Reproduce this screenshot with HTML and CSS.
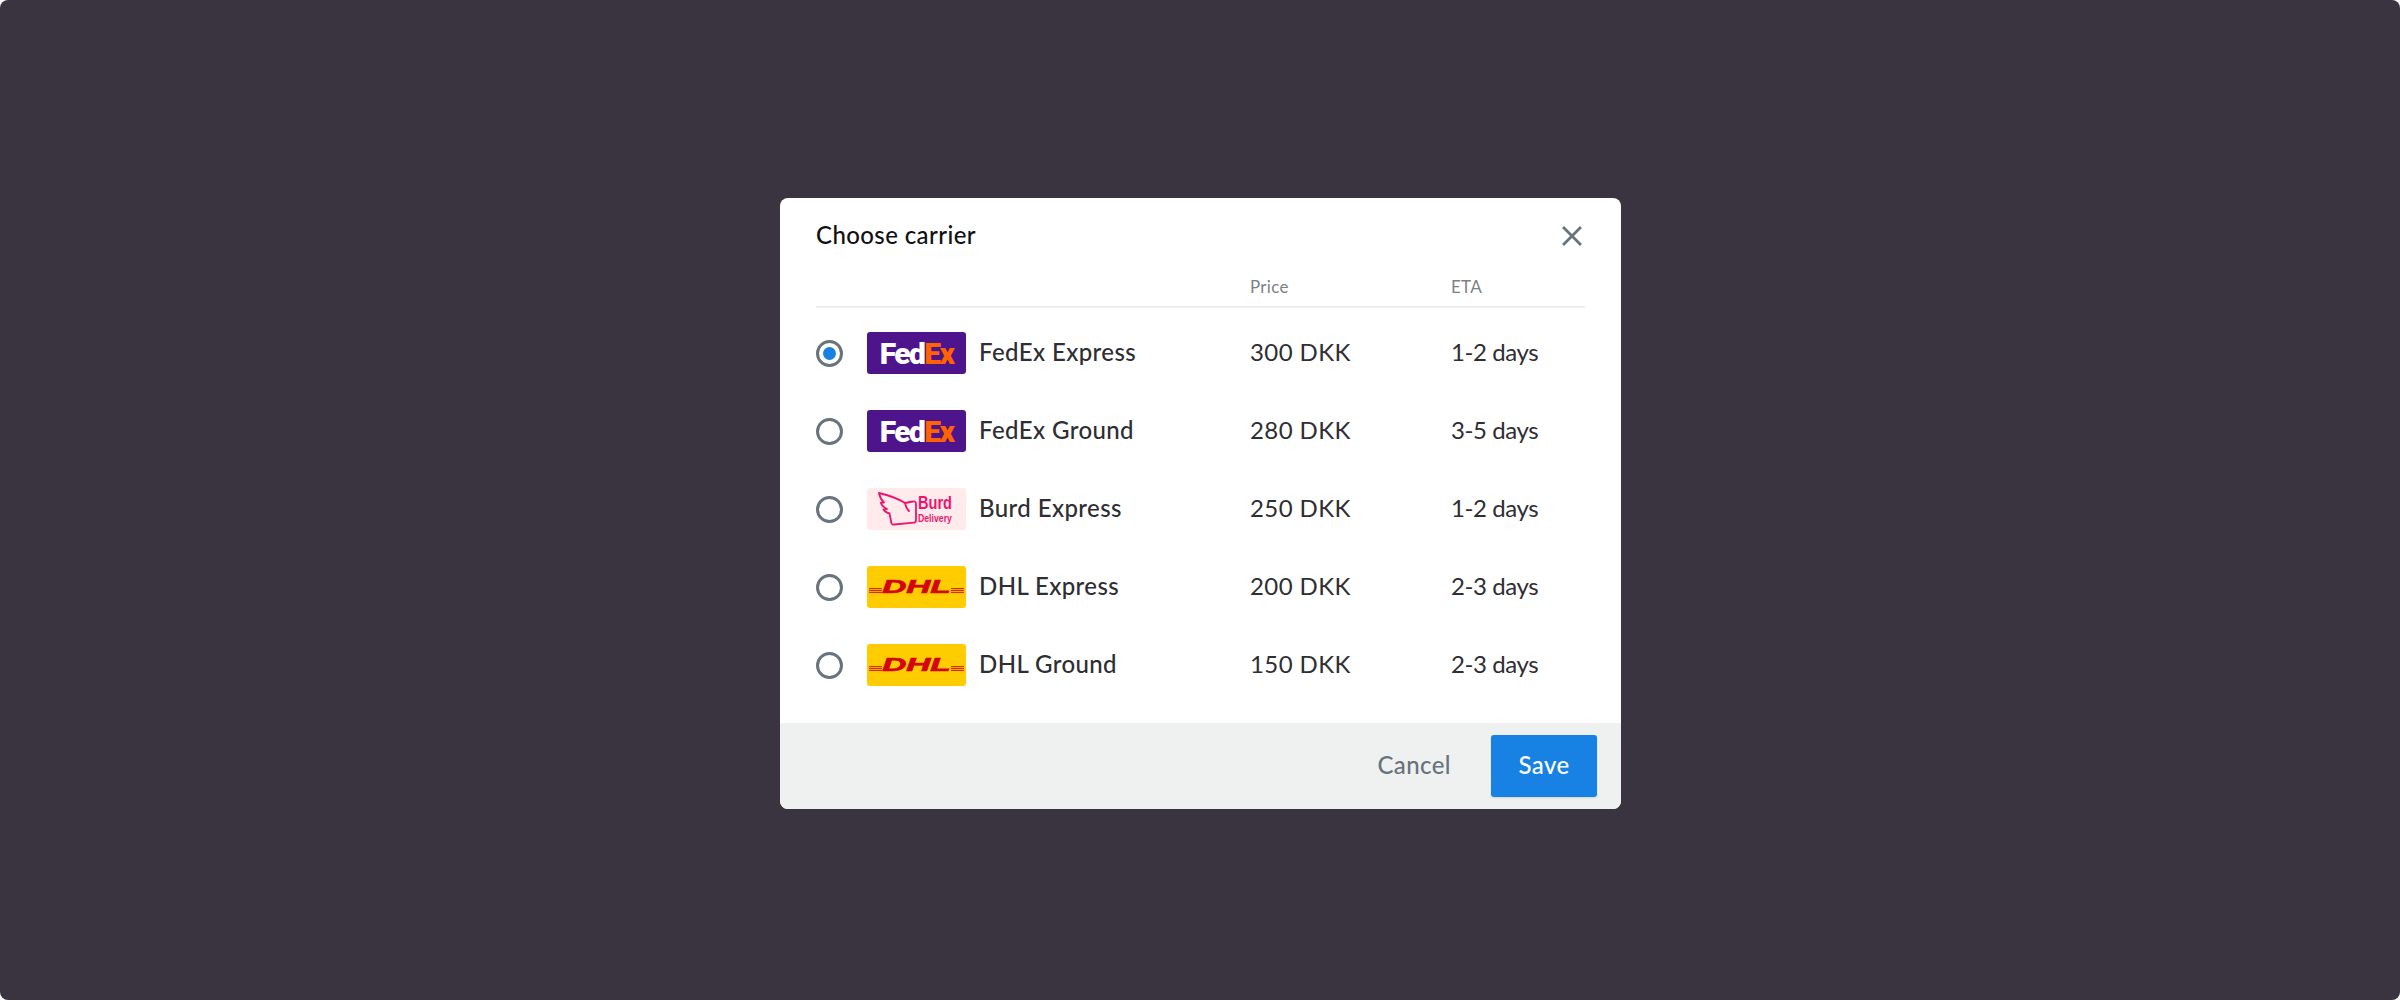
FILE: index.html
```html
<!DOCTYPE html>
<html>
<head>
  <title>Choose carrier</title>
  <link rel="stylesheet" href="styles.css">
</head>
<body>
  <div class="backdrop">
    <div class="modal">
      <div class="modal-body">
        <div class="modal-header">
          <h2 class="title">Choose carrier</h2>
          <button class="close-btn">
            <svg class="close-icon" viewBox="0 0 22 22" fill="none" stroke="currentColor">
              <path d="M2 2l18 18M20 2L2 20" stroke-width="2.8"/>
            </svg>
          </button>
        </div>

        <div class="table-head">
          <span class="col-price">Price</span>
          <span class="col-eta">ETA</span>
        </div>

        <div class="carrier-list">
          <label class="carrier-row">
            <span class="radio checked"></span>
            <span class="logo logo-fedex"><span class="fed">Fed</span><span class="ex">Ex</span></span>
            <span class="carrier-name">FedEx Express</span>
            <span class="col-price cell">300 DKK</span>
            <span class="col-eta cell">1-2 days</span>
          </label>
          <label class="carrier-row">
            <span class="radio"></span>
            <span class="logo logo-fedex"><span class="fed">Fed</span><span class="ex">Ex</span></span>
            <span class="carrier-name">FedEx Ground</span>
            <span class="col-price cell">280 DKK</span>
            <span class="col-eta cell">3-5 days</span>
          </label>
          <label class="carrier-row">
            <span class="radio"></span>
            <span class="logo logo-burd">
              <svg class="burd-wing" viewBox="0 0 39 34" fill="none" stroke="currentColor">
                <path d="M1 1C10 3 19 6 27 11L35 9.5C37 9 38 10 38 12L38 28C38 29.5 37 30.5 36 30.6L16 32.5C14.5 32.7 13.5 32 13.3 30.5L11.5 21.5C9 21 7 20 5.5 17.5C7 17.6 8 17.5 9 17C6 15.5 3.5 13 2.8 10.5C4 11 5 11 6 10.5C3.5 8 1.5 4 1 1Z" stroke-width="1.8" stroke-linejoin="round"/>
                <path d="M27 11C27.5 14 29 17 31 19" stroke-width="1.8" stroke-linecap="round"/>
              </svg>
              <span class="burd-text"><span class="burd-big">Burd</span><span class="burd-small">Delivery</span></span>
            </span>
            <span class="carrier-name">Burd Express</span>
            <span class="col-price cell">250 DKK</span>
            <span class="col-eta cell">1-2 days</span>
          </label>
          <label class="carrier-row">
            <span class="radio"></span>
            <span class="logo logo-dhl">
              <span class="dhl-stripes"></span><span class="dhl-text">DHL</span><span class="dhl-stripes"></span>
            </span>
            <span class="carrier-name">DHL Express</span>
            <span class="col-price cell">200 DKK</span>
            <span class="col-eta cell">2-3 days</span>
          </label>
          <label class="carrier-row">
            <span class="radio"></span>
            <span class="logo logo-dhl">
              <span class="dhl-stripes"></span><span class="dhl-text">DHL</span><span class="dhl-stripes"></span>
            </span>
            <span class="carrier-name">DHL Ground</span>
            <span class="col-price cell">150 DKK</span>
            <span class="col-eta cell">2-3 days</span>
          </label>
        </div>
      </div>

      <div class="modal-footer">
        <button class="cancel-btn">Cancel</button>
        <button class="save-btn">Save</button>
      </div>
    </div>
  </div>
</body>
</html>
```

FILE: styles.css
```css
:root {
  --ui-font: Lato, "Open Sans", Arial, sans-serif;
  --backdrop: #3a3440;
  --text-primary: #2e2e33;
  --text-secondary: #7d8187;
  --slate: #68737d;
  --blue: #1781e4;
  --border: #eeeff0;
}

html, body {
  margin: 0;
  padding: 0;
  background: #ffffff;
}

body {
  font-family: var(--ui-font);
  color: var(--text-primary);
}

.backdrop {
  height: 1000px;
  box-sizing: border-box;
  padding-top: 198px;
  display: flex;
  justify-content: center;
  align-items: flex-start;
  background: var(--backdrop);
  border-radius: 8px;
}

.modal {
  width: 841px;
  height: 611px;
  margin-left: 1px;
  display: flex;
  flex-direction: column;
  background: #ffffff;
  border-radius: 8px;
  overflow: hidden;
}

.modal-body {
  flex: 1;
  padding: 0 36px;
}

.modal-header {
  display: flex;
  align-items: center;
  justify-content: space-between;
  height: 74px;
}

.title {
  margin: 0;
  padding-bottom: 2px;
  font-size: 24px;
  font-weight: 500;
  letter-spacing: 0.4px;
  color: #111111;
}

.close-btn {
  padding: 0;
  margin: 2px 2px 0 0;
  border: none;
  background: none;
  color: var(--slate);
  display: flex;
}

.close-icon {
  width: 22px;
  height: 22px;
}

.table-head {
  display: flex;
  height: 29px;
  padding-bottom: 5px;
  align-items: center;
  padding-left: 434px;
  border-bottom: 2px solid var(--border);
  font-size: 17px;
  font-weight: 400;
  letter-spacing: 0.3px;
  color: var(--text-secondary);
}

.col-price {
  width: 201px;
}

.carrier-list {
  padding-top: 6px;
}

.carrier-row {
  display: flex;
  align-items: center;
  height: 78px;
  font-size: 24px;
  letter-spacing: 0.4px;
}

.radio {
  width: 27px;
  height: 27px;
  box-sizing: border-box;
  border: 3px solid var(--slate);
  border-radius: 50%;
  margin-right: 24px;
  display: flex;
  align-items: center;
  justify-content: center;
}

.radio.checked:before {
  content: "";
  width: 13px;
  height: 13px;
  border-radius: 50%;
  background: var(--blue);
}

.logo {
  width: 99px;
  height: 42px;
  border-radius: 3px;
  margin-right: 13px;
  display: flex;
  align-items: center;
  justify-content: center;
  overflow: hidden;
  letter-spacing: 0;
}

.carrier-name {
  width: 271px;
  padding-bottom: 4px;
  font-weight: 500;
}

.cell {
  padding-bottom: 4px;
  font-weight: 400;
}

.cell.col-eta {
  letter-spacing: -0.4px;
}

/* logos */
.logo-fedex {
  background: #4d148c;
  font-family: Roboto, "Liberation Sans", sans-serif;
  font-size: 30px;
  font-weight: 900;
  letter-spacing: -1.6px;
}

.fed {
  color: #ffffff;
}

.ex {
  color: #ff6200;
}

.logo-burd {
  background: #ffeaec;
  color: #f0136e;
  justify-content: flex-start;
  padding-left: 11px;
  box-sizing: border-box;
}

.burd-wing {
  flex: none;
  width: 39px;
  height: 34px;
}

.burd-text {
  display: flex;
  flex-direction: column;
  gap: 2px;
  margin-left: 1px;
  font-family: "Liberation Sans", Arial, sans-serif;
  font-weight: 700;
  line-height: 1;
  white-space: nowrap;
}

.burd-big {
  font-size: 18px;
  transform: scaleX(0.81);
  transform-origin: left;
}

.burd-small {
  font-size: 10px;
  transform: scaleX(0.87);
  transform-origin: left;
}

.logo-dhl {
  background: #ffcc00;
  color: #d40511;
  justify-content: space-between;
  padding: 0 2px;
  box-sizing: border-box;
}

.dhl-text {
  font-family: "Liberation Sans", Arial, sans-serif;
  font-size: 18px;
  font-weight: 700;
  font-style: italic;
  line-height: 1;
  transform: scaleX(1.85);
  -webkit-text-stroke: 0.7px;
}

.dhl-stripes {
  flex: none;
  width: 13px;
  height: 5px;
  margin-top: 7px;
  background: repeating-linear-gradient(#dc2a14 0 1px, #f9a90a 1px 2px);
}

.modal-footer {
  height: 86px;
  flex-shrink: 0;
  box-sizing: border-box;
  padding-right: 24px;
  display: flex;
  align-items: center;
  justify-content: flex-end;
  gap: 40px;
  background: #eff1f1;
}

.cancel-btn, .save-btn {
  font-family: var(--ui-font);
  font-size: 24px;
  font-weight: 500;
  letter-spacing: 0.4px;
  border: none;
  padding: 0 0 3px;
}

.cancel-btn {
  background: none;
  color: var(--slate);
}

.save-btn {
  width: 106px;
  height: 62px;
  border-radius: 3px;
  background: var(--blue);
  color: #ffffff;
  box-shadow: 0 1px 2px rgba(0,0,0,0.12);
}
```
